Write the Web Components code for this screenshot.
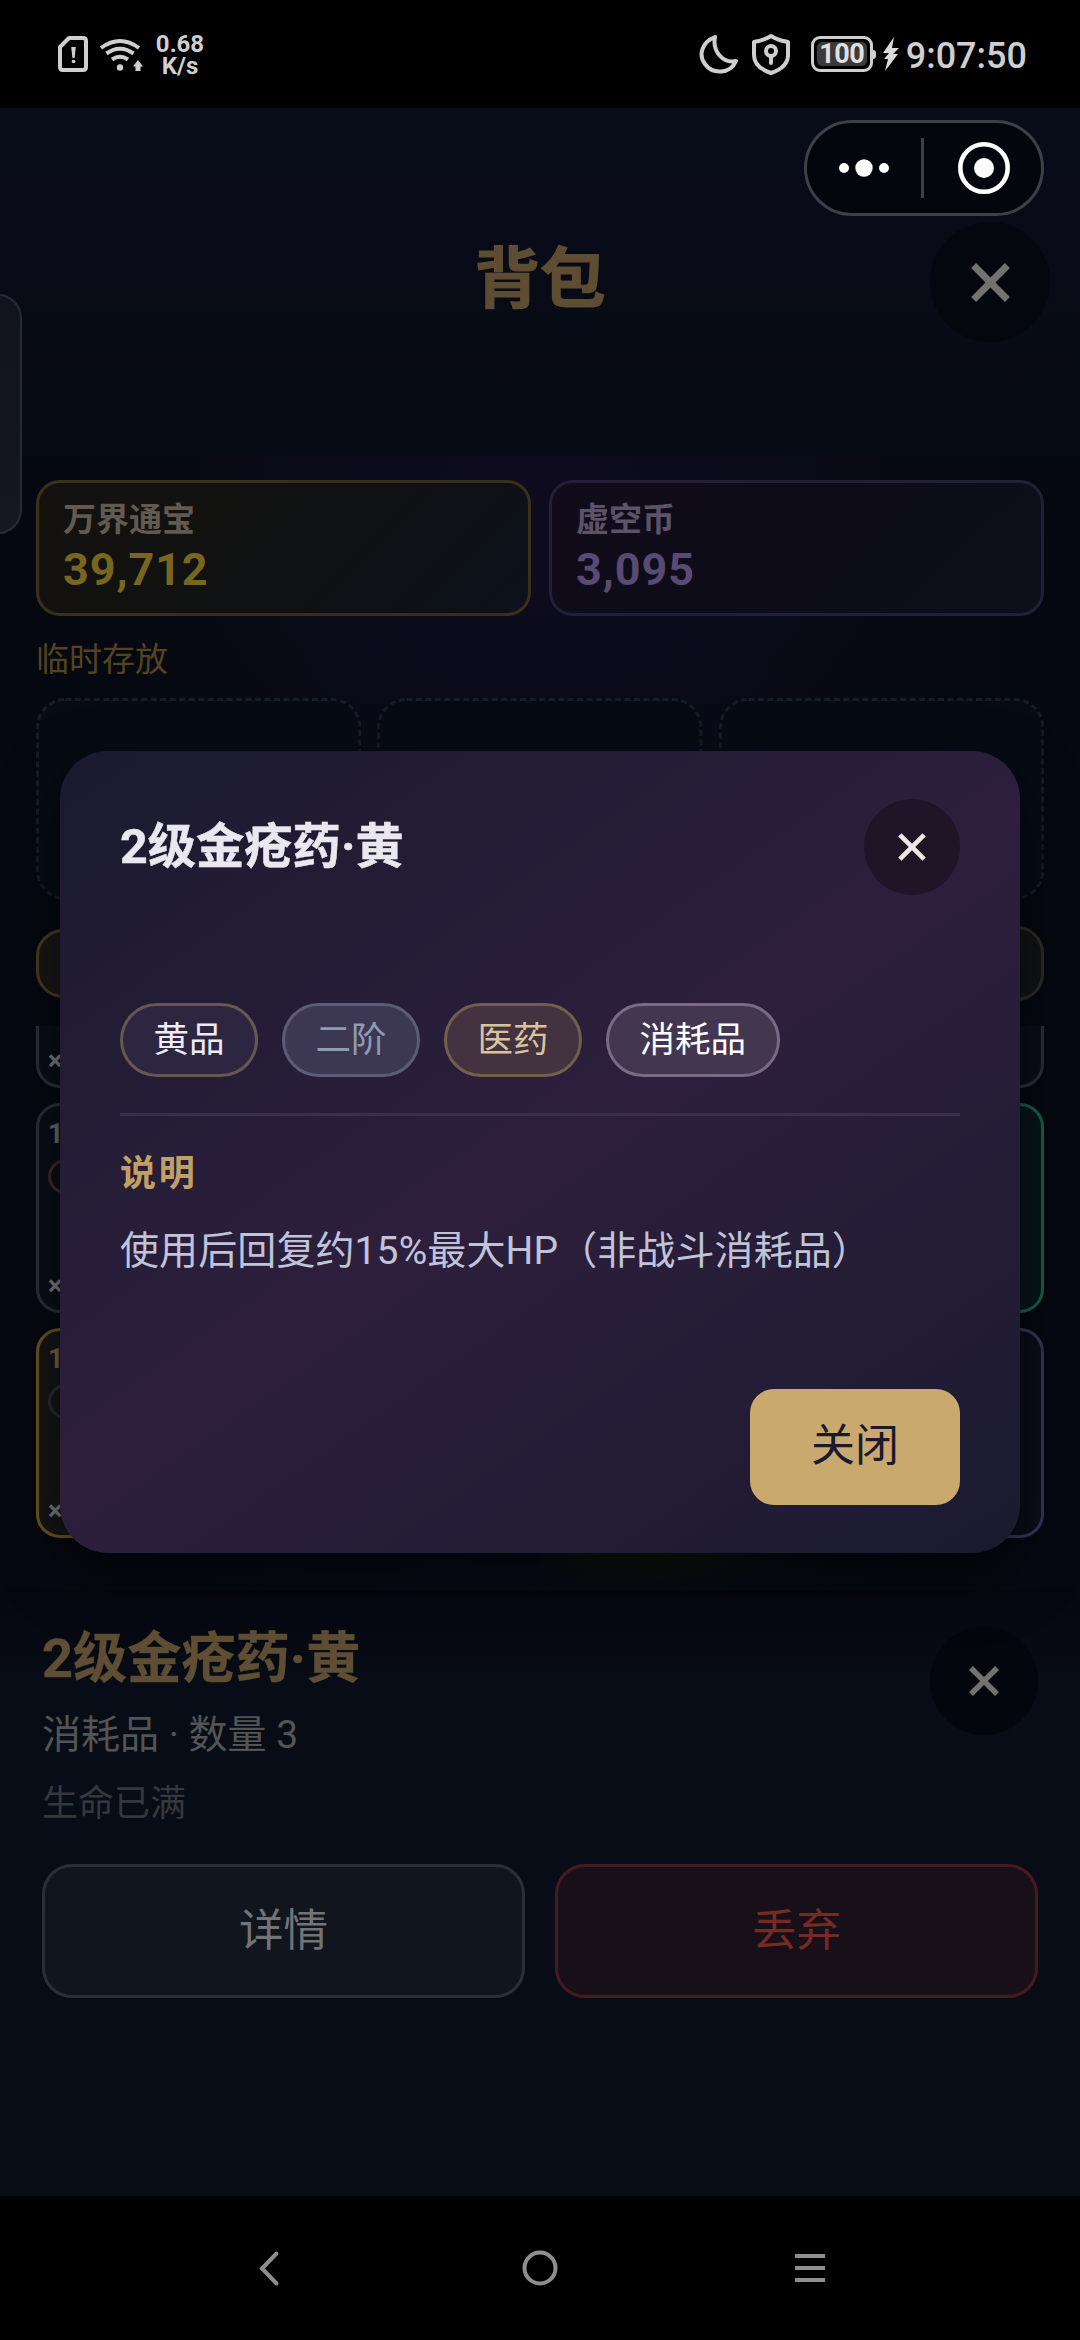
<!DOCTYPE html>
<html lang="zh-CN">
<head>
<meta charset="utf-8">
<title>背包</title>
<style>
html,body{margin:0;background:#000}
body{width:1080px;height:2340px;overflow:hidden;font-family:Roboto,"Noto Sans CJK SC",sans-serif}
</style>
</head>
<body>
<bag-screen></bag-screen>
<script>
const define = (name, html) => customElements.define(name, class extends HTMLElement {
  constructor() {
    super();
    this.attachShadow({ mode: 'open' }).innerHTML = html;
  }
});

define('status-bar', `
<style>
:host{display:flex;box-sizing:border-box;height:108px;flex:none;background:#000;color:#cfcfcf;padding:0 53px 0 56px;justify-content:space-between}
.g{display:flex;align-items:flex-start}
svg{display:block;flex:none}
.net{display:flex;flex-direction:column;font-size:24px;font-weight:700;text-align:center;width:54px;margin:33px 0 0 7px}
.net span{height:22px;line-height:22px}
.time{font-size:36px;font-weight:500;line-height:42px;margin:35px 0 0 6px;white-space:nowrap}
.bat{box-sizing:border-box;width:62px;height:36px;border:3px solid #cfcfcf;border-radius:9px;margin:36px 0 0 20px;padding:3px;position:relative}
.bat span{display:block;background:#3a3a3a;border-radius:5px;height:24px;line-height:25px;font-size:27px;font-weight:700;text-align:center;color:#e0e0e0;letter-spacing:-.6px}
.bat::after{content:"";position:absolute;right:-6px;top:11px;width:3px;height:9px;background:#cfcfcf;border-radius:0 3px 3px 0}
</style>
<div class="g">
 <svg width="90" height="108" viewBox="56 0 90 108" fill="none" stroke="#cfcfcf" stroke-width="4">
  <path d="M69 38H83Q86 38 86 41V67Q86 70 83 70H63Q60 70 60 67V47Z" stroke-linejoin="round"/>
  <path d="M71.200 47H75.800L74.600 58H72.400Z" fill="#cfcfcf" stroke="none"/><circle cx="73.500" cy="61.500" r="1.800" fill="#cfcfcf" stroke="none"/>
  <path d="M101 48Q120 34 139 48M106.500 53.500Q120 44 133.500 53.500M112 59.500Q120 54 128 59.500"/>
  <circle cx="120" cy="67.500" r="3.200" fill="#cfcfcf" stroke="none"/>
  <path d="M138 60L143 66.500H140.500V71H135.500V66.500H133Z" fill="#cfcfcf" stroke="none"/>
 </svg>
 <div class="net"><span>0.68</span><span>K/s</span></div>
</div>
<div class="g">
 <svg width="92" height="108" viewBox="699 0 92 108" fill="none" stroke="#cfcfcf" stroke-width="4" stroke-linejoin="round">
  <path d="M715 37C702 42 698 55 705 64C712 74 730 75 736 61C724 64 712 52 715 37Z"/>
  <path d="M771 36C765 40 759 41 754 42V55C754 65 762 70 771 73C780 70 788 65 788 55V42C783 41 777 40 771 36Z"/>
  <circle cx="771" cy="51" r="5"/><path d="M771 56V63" stroke-linecap="round"/>
 </svg>
 <div class="bat"><span>100</span></div>
 <svg width="18" height="36" viewBox="0 0 18 36" style="margin:36px 0 0 9px"><path d="M12 1L1 17H7L2 23H6L3 35L16 18H11L17 12H10Z" fill="#dcdcdc"/></svg>
 <div class="time">9:07:50</div>
</div>`);

define('mini-capsule', `
<style>
:host{display:flex;box-sizing:border-box;width:240px;height:96px;border:3px solid #3c4047;border-radius:48px;background:#03060d;align-items:center}
svg{display:block}
</style>
<svg width="234" height="90" viewBox="807 123 234 90"><g fill="#fff"><circle cx="844" cy="168" r="5"/><circle cx="864" cy="168" r="8.700"/><circle cx="884" cy="168" r="5"/><circle cx="984" cy="168" r="10"/></g><path d="M922.500 138V198" stroke="#3c4047" stroke-width="3"/><circle cx="984" cy="168" r="23.700" fill="none" stroke="#fff" stroke-width="4.600"/></svg>`);

define('close-button', `
<style>
:host{display:flex;align-items:center;justify-content:center;flex:none;width:var(--d);height:var(--d);border-radius:50%;background:var(--bg,#04070e);color:var(--c,#737271)}
svg{display:block;width:var(--x);height:var(--x)}
path{stroke-width:var(--w,5.2)}
</style>
<svg viewBox="0 0 30 30"><path d="M2 2L28 28M28 2L2 28" stroke="currentColor"/></svg>`);

define('currency-card', `
<style>
:host{display:flex;flex-direction:column;box-sizing:border-box;flex:1;height:136px;border:3px solid var(--line);border-radius:24px;background:var(--fill);padding:19px 24px;font-weight:700}
.l{font-size:33px;line-height:36px;color:var(--label)}
.v{font-size:45px;line-height:63px;color:var(--value);letter-spacing:.9px}
</style>
<div class="l"><slot name="label"></slot></div><div class="v"><slot></slot></div>`);

define('empty-slot', `
<style>:host{display:block;flex:1;height:202px}svg{display:block;width:100%;height:202px}</style>
<svg viewBox="0 0 326 202" preserveAspectRatio="none"><rect x="1.500" y="1.500" width="323" height="199" rx="28" fill="#060b15" stroke="#171c25" stroke-width="3" stroke-dasharray="6 3.500"/></svg>`);

define('item-cell', `
<style>
:host{display:flex;flex-direction:column;justify-content:space-between;box-sizing:border-box;flex:1;height:210px;border:3px solid var(--line,#2a2f38);border-radius:24px;background:var(--fill,#0a0e17);padding:12px 9px 12px;color:var(--ink,#68696d);font-size:27px;font-weight:700}
.t{line-height:32px;min-height:32px}
.p{width:80px;height:29px;border:3px solid var(--tag,#3a2d25);border-radius:18px;margin-top:9px}
.q{line-height:24px;color:#77797c;min-height:24px}
:host([blank]) .p{visibility:hidden}
</style>
<div><div class="t"><slot></slot></div><div class="p"></div></div><div class="q"><slot name="q"></slot></div>`);

define('item-tag', `
<style>
:host{display:block;box-sizing:border-box;height:74px;border:3px solid var(--line);border-radius:37px;background:var(--fill);color:var(--ink);font-size:35.500px;line-height:68px;padding:0 30.500px;white-space:nowrap}
</style><slot></slot>`);

define('action-button', `
<style>
:host{display:flex;box-sizing:border-box;flex:1;height:134px;border:3px solid var(--line);border-radius:30px;background:var(--fill);color:var(--ink);font-size:44.500px;line-height:128px;justify-content:center}
span{display:block;height:128px;line-height:128px}
</style><span><slot></slot></span>`);

define('item-dialog', `
<style>
:host{display:flex;flex-direction:column;box-sizing:border-box;width:960px;height:802px;border-radius:48px;padding:48px 60px;background:linear-gradient(145deg,#1a1a2e 0%,#2d1f3d 50%,#1a1a2e 100%);box-shadow:0 24px 60px rgba(0,0,0,.55)}
header{display:flex;justify-content:space-between;align-items:center;height:96px}
h2{margin:0;font-size:48.300px;font-weight:700;line-height:60px;color:#e8e8ee;-webkit-text-stroke:.5px #e8e8ee}
close-button{--d:96px;--x:28px;--w:5;--bg:#201527;--c:#eee8e6}
.tags{display:flex;gap:24px;margin-top:108px;height:74px}
hr{width:100%;height:3px;border:0;margin:36px 0 0;background:#3a2f4a}
h3{margin:36px 0 0;font-size:36px;line-height:44px;letter-spacing:2.700px;color:#c1a065}
p{margin:28px 0 0;font-size:39px;line-height:54px;color:#c1c3d9;letter-spacing:.1px;white-space:nowrap}
.ok{align-self:flex-end;margin-top:auto;box-sizing:border-box;width:210px;height:116px;border-radius:24px;background:#c9a96e;color:#1a1a2e;font-size:44px;line-height:115px;text-align:center}
</style>
<header><h2>2级金疮药·黄</h2><close-button></close-button></header>
<div class="tags">
<item-tag style="--line:#665851;--fill:#2d2641;--ink:#efebf6">黄品</item-tag>
<item-tag style="--line:#5d5c77;--fill:#3c3853;--ink:#8f9bb4">二阶</item-tag>
<item-tag style="--line:#725e4c;--fill:#433240;--ink:#d8c49b">医药</item-tag>
<item-tag style="--line:#7a6a86;--fill:#433650;--ink:#fff">消耗品</item-tag>
</div>
<hr><h3>说明</h3>
<p>使用后回复约15%最大HP（非战斗消耗品）</p>
<div class="ok">关闭</div>`);

define('detail-panel', `
<style>
:host{display:flex;flex-direction:column;box-sizing:border-box;height:606px;padding:36px 42px 0;background:linear-gradient(#05070e,#080c16 90px,#080d18)}
.top{display:flex;justify-content:space-between;align-items:flex-start}
.n{font-size:54.200px;font-weight:700;line-height:66px;color:#5f4e33;-webkit-text-stroke:.4px #5f4e33}
.s{font-size:39px;line-height:48px;margin-top:19px;color:#535455}
.m{font-size:36px;line-height:46px;margin-top:22px;color:#34373c}
close-button{--d:108px;--x:30px;--w:5.4;--bg:#04060d;margin-top:1px}
.b{display:flex;gap:30px;margin-top:37px}
</style>
<div class="top"><div><div class="n">2级金疮药·黄</div><div class="s">消耗品 · 数量 3</div><div class="m">生命已满</div></div><close-button></close-button></div>
<div class="b"><action-button style="--line:#2b2f37;--fill:#11151e;--ink:#737477">详情</action-button><action-button style="--line:#471a21;--fill:#171019;--ink:#782a22">丢弃</action-button></div>`);

define('nav-bar', `
<style>:host{display:flex;height:144px;background:#000;align-items:center;justify-content:center}svg{display:block;width:270px;height:144px}</style>
<svg viewBox="135 2196 270 144" fill="none" stroke="#8e8e8e" stroke-width="4"><path d="M276.500 2253.500L262 2268.500L276.500 2283.500" stroke-linecap="round"/></svg>
<svg viewBox="405 2196 270 144" fill="none" stroke="#8e8e8e" stroke-width="4"><circle cx="540" cy="2268" r="15.500"/></svg>
<svg viewBox="675 2196 270 144" fill="none" stroke="#8e8e8e" stroke-width="4"><path d="M795 2256H825M795 2268H825M795 2280H825"/></svg>`);

define('bag-screen', `
<style>
:host{display:flex;flex-direction:column;width:1080px;height:2340px;position:relative;overflow:hidden;background:#080c17}
header{display:flex;box-sizing:border-box;height:348px;padding:114px 30px 0 150px;background:linear-gradient(#090c19,#070b15)}
h1{flex:1;margin:0;text-align:center;font-size:65.500px;font-weight:700;line-height:116px;color:#5f4d33;-webkit-text-stroke:1.2px #5f4d33}
header close-button{--d:120px;--x:39px;--w:5.4}
main{display:flex;flex-direction:column;box-sizing:border-box;height:1134px;padding:24px 36px 0;background:radial-gradient(ellipse 460px 360px at 540px 60px,rgba(17,12,34,.8),rgba(12,10,28,0)),linear-gradient(90deg,#050810,#070b15 50%,#050810)}
.row{display:flex;gap:18px;flex:none}
.lbl{font-size:33px;line-height:40px;margin:24px 0 18px;color:#54431f;height:40px}
.slots{gap:16px}
.tabs{display:flex;justify-content:space-between;align-items:center;height:75px;margin-top:26px}
.tab{box-sizing:border-box;width:300px;height:69px;border:3px solid #483b20;border-radius:27px;background:#171716}
.tab.b{height:75px;border-color:#302a24;background:#121314}
.list{display:flex;flex-direction:column;gap:15px;justify-content:flex-end;height:512px;margin-top:25px;overflow:hidden;flex:none}
.list .row{gap:15px}
mini-capsule{position:absolute;left:804px;top:120px}
item-dialog{position:absolute;left:60px;top:751px}
.handle{position:absolute;left:-3px;top:294px;width:21px;height:236px;border:2px solid #272b37;border-radius:0 24px 24px 0;background:linear-gradient(#11141f,#151821)}
.glow{position:absolute;left:540px;top:1553px;width:250px;height:38px;background:radial-gradient(ellipse at 45% 0,#0b0c08,rgba(8,9,8,0) 75%)}
</style>
<status-bar></status-bar>
<header><h1>背包</h1><close-button></close-button></header>
<main>
<div class="row">
<currency-card style="--line:#3a301a;--fill:linear-gradient(135deg,#14120f,#101111 45%,#0c111b);--label:#625a51;--value:#79661e"><span slot="label">万界通宝</span>39,712</currency-card>
<currency-card style="--line:#231f38;--fill:linear-gradient(135deg,#110c1b,#0e0c18 50%,#0c101b);--label:#5b5367;--value:#574b73"><span slot="label">虚空币</span>3,095</currency-card>
</div>
<div class="lbl">临时存放</div>
<div class="row slots"><empty-slot></empty-slot><empty-slot></empty-slot><empty-slot></empty-slot></div>
<div class="tabs"><div class="tab"></div><div class="tab b"></div></div>
<div class="list">
<div class="row"><item-cell blank><span slot="q">×</span></item-cell><item-cell blank></item-cell><item-cell blank></item-cell></div>
<div class="row"><item-cell>1<span slot="q">×</span></item-cell><item-cell blank></item-cell><item-cell blank style="--line:#176049;--fill:#08151a"></item-cell></div>
<div class="row"><item-cell style="--line:#6b5522;--fill:#151515;--tag:#282c33;--ink:#756241">1<span slot="q">×</span></item-cell><item-cell blank></item-cell><item-cell blank style="--line:#34365a;--fill:#0b0d19"></item-cell></div>
</div>
</main>
<detail-panel></detail-panel>
<nav-bar></nav-bar>
<mini-capsule></mini-capsule>
<div class="handle"></div>
<item-dialog></item-dialog>
<div class="glow"></div>`);
</script>
</body>
</html>
